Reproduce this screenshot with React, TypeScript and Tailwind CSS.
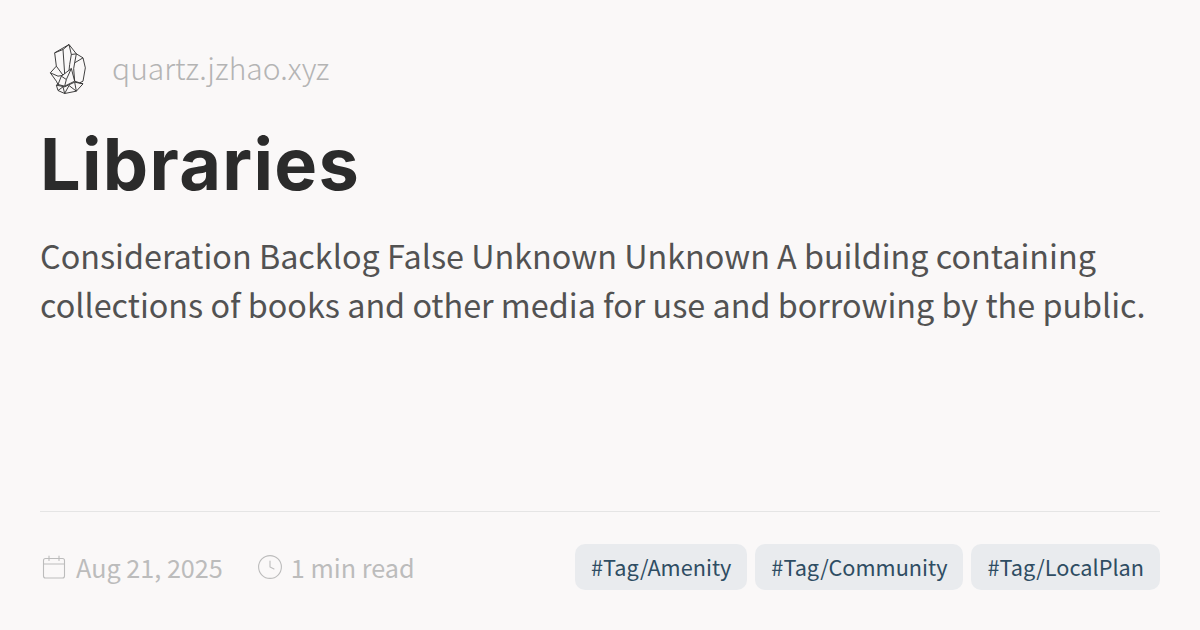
export default function App() {
  return (
    <div className="w-[1200px] h-[630px] bg-[#faf8f8] flex flex-col px-10 pt-[39px] pb-10 font-['Noto_Sans_CJK_SC','Noto_Sans',sans-serif] overflow-hidden">
      {/* site header */}
      <div className="flex items-center h-[60px] shrink-0">
        <svg viewBox="40 30 150 170" className="w-[50px] h-[57px] ml-[3px] mr-[19px]" fill="none" stroke="#333" strokeWidth="2.8" strokeLinejoin="round">
          <path d="M118 40 L75 65 L80 105 L62 125 L80 150 L85 160 L80 162 L85 178 L105 187 L140 180 L160 158 L150 155 L160 150 L167 110 L160 80 L140 68 Z" />
          <path d="M75 65 L100 55 L118 40 M100 55 L105 128 M118 40 L125 70 L120 100 L118 118" />
          <path d="M125 70 L140 68 L135 95 L132 112 M160 80 L135 95 M132 112 L135 150 M150 155 L135 150" />
          <path d="M80 105 L100 132 M62 125 L85 135 L97 133" />
          <path d="M85 160 L95 135 L125 112 L135 150 L105 165 Z M95 135 L110 145 L125 112 M110 145 L105 165" />
          <path d="M80 162 L105 167 L135 153 L160 158 M85 178 L100 167 L105 187 L118 163 L140 180 L135 153" />
        </svg>
        <span className="-mt-1 text-[30px] leading-none text-[#b4b4b4] font-light">quartz.jzhao.xyz</span>
      </div>

      <h1 className="mt-[20px] text-[72px] leading-[90px] font-bold tracking-[1.3px] text-[#2b2b2b] font-['Inter',sans-serif]">Libraries</h1>

      <p className="mt-[21px] text-[32.35px] leading-[49px] text-[#525252]">
        Consideration Backlog False Unknown Unknown A building containing collections of books and other media for use and borrowing by the public.
      </p>

      <div className="mt-auto border-t border-[#e5e5e5] pt-8 flex items-center justify-between">
        <div className="flex items-center text-[#bcbcbc] text-[25.2px] leading-none">
          <svg viewBox="0 0 24 24" className="w-6 h-6 ml-[2px] mr-[10px]" fill="none" stroke="currentColor" strokeWidth="1.1" strokeLinecap="round">
            <rect x="1.5" y="3.5" width="21" height="19.5" rx="2" />
            <path d="M1.5 9h21M7 1v4.5M17 1v4.5" />
          </svg>
          <span className="mt-[2px]">Aug 21, 2025</span>
          <svg viewBox="0 0 24 24" className="w-6 h-6 ml-[35px] mr-[9px]" fill="none" stroke="currentColor" strokeWidth="1.1" strokeLinecap="round">
            <circle cx="12" cy="12" r="11.4" />
            <path d="M12 6v6l4 2" />
          </svg>
          <span className="mt-[2px]">1 min read</span>
        </div>
        <div className="flex gap-2">
          <span className="bg-[#e9ebee] text-[#2f4d63] text-[21.7px] leading-none rounded-[10px] px-4 h-[46px] flex items-center">#Tag/Amenity</span>
          <span className="bg-[#e9ebee] text-[#2f4d63] text-[21.7px] leading-none rounded-[10px] px-4 h-[46px] flex items-center">#Tag/Community</span>
          <span className="bg-[#e9ebee] text-[#2f4d63] text-[21.7px] leading-none rounded-[10px] px-4 h-[46px] flex items-center">#Tag/LocalPlan</span>
        </div>
      </div>
    </div>
  );
}
